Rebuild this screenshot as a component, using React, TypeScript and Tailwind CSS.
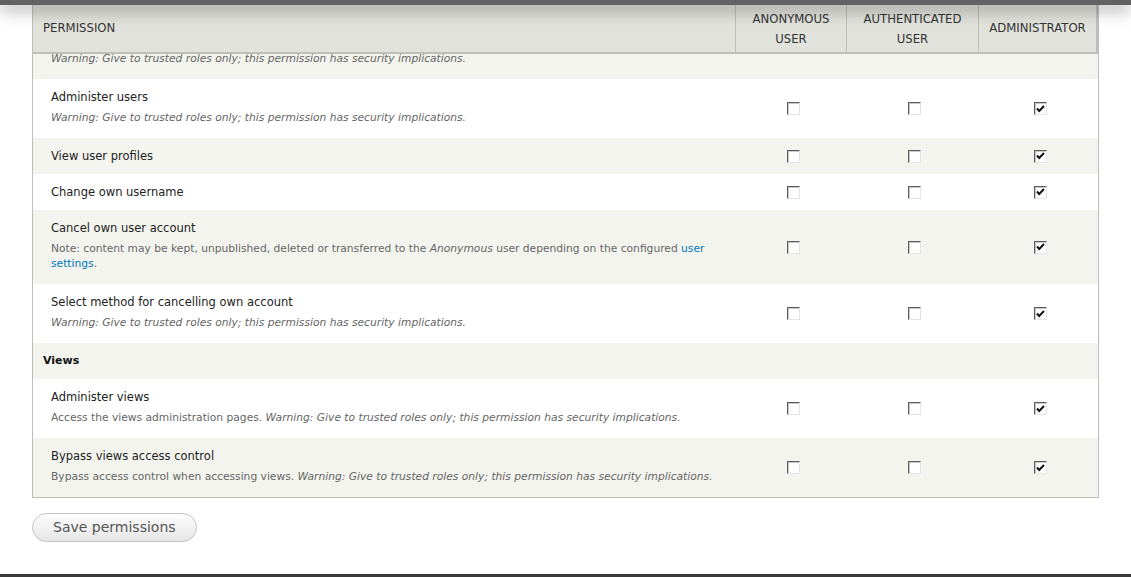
import React from 'react';

interface Perm {
  title: string
  desc?: React.ReactNode
  admin: boolean
}

const warning = (
  <em>Warning: Give to trusted roles only; this permission has security implications.</em>
)

const userPerms: Perm[] = [
  { title: 'Administer users', desc: warning, admin: true },
  { title: 'View user profiles', admin: true },
  { title: 'Change own username', admin: true },
  {
    title: 'Cancel own user account',
    desc: (
      <>
        Note: content may be kept, unpublished, deleted or transferred to the <em>Anonymous</em> user depending on the configured{' '}
        <a className="text-[#0074bd]">user settings</a>.
      </>
    ),
    admin: true,
  },
  { title: 'Select method for cancelling own account', desc: warning, admin: true },
]

const viewsPerms: Perm[] = [
  {
    title: 'Administer views',
    desc: <>Access the views administration pages. {warning}</>,
    admin: true,
  },
  {
    title: 'Bypass views access control',
    desc: <>Bypass access control when accessing views. {warning}</>,
    admin: true,
  },
]

const Checkbox: React.FC<{ checked?: boolean }> = ({ checked }) => (
  <span className="w-[13px] h-[13px] flex items-center justify-center border border-t-[#5c5c5c] border-l-[#5c5c5c] border-r-[#e4e4e4] border-b-[#e4e4e4] bg-white shadow-[inset_1px_1px_0_#c8c8c8]">
    {checked && (
      <svg width="9" height="8" viewBox="0 0 9 8">
        <path d="M1 3.5 L3.2 6 L8 1" fill="none" stroke="#111" strokeWidth="2" />
      </svg>
    )}
  </span>
)

const cols = 'grid grid-cols-[1fr_111px_132px_120px]'

const Row: React.FC<{ perm: Perm; odd: boolean }> = ({ perm, odd }) => (
  <div className={`${cols} ${odd ? 'bg-[#f3f4ee]' : 'bg-white'}`}>
    <div className="pl-[18px] pr-[10px] pt-[10px] pb-[10px]">
      <div className="text-[11.5px] leading-[16px] text-[#222]">{perm.title}</div>
      {perm.desc && (
        <div className="mt-[5px] mb-[3px] text-[10.7px] leading-[15px] text-[#666]">{perm.desc}</div>
      )}
    </div>
    <div className="flex items-center justify-center pl-[5px]"><Checkbox /></div>
    <div className="flex items-center justify-center pl-[5px]"><Checkbox /></div>
    <div className="flex items-center justify-center pl-[5px]"><Checkbox checked={perm.admin} /></div>
  </div>
)

export default function App() {
  return (
    <div className="h-[577px] flex flex-col bg-white overflow-hidden" style={{ fontFamily: '"DejaVu Sans", Verdana, sans-serif' }}>
      {/* sticky bar above the header, casts a shadow on the page */}
      <div className="h-[5px] shrink-0 bg-[#626262] relative z-10 shadow-[0_4px_16px_rgba(0,0,0,0.6)]" />

      <div className="mx-[32px] border border-t-0 border-[#bebfb9]">
        {/* table header */}
        <div className={`${cols} bg-[#e1e2dc] border-b-2 border-[#bebfb9] text-[11.7px] text-[#333] uppercase`}>
          <div className="px-[10px] flex items-center h-[47px]">Permission</div>
          <div className="border-l border-[#bebfb9] flex items-center justify-center text-center leading-[20px] pt-[1px]">Anonymous<br />user</div>
          <div className="border-l border-[#bebfb9] flex items-center justify-center text-center leading-[20px] pt-[1px]">Authenticated<br />user</div>
          <div className="border-l border-r-2 border-[#bebfb9] flex items-center justify-center text-center">Administrator</div>
        </div>

        {/* tail of the previous row, partly under the sticky header */}
        <div className="h-[25px] overflow-hidden bg-[#f3f4ee] flex flex-col justify-end">
          <div className="pl-[18px] pb-[10px]">
            <div className="mb-[3px] text-[10.7px] leading-[15px] text-[#666]">{warning}</div>
          </div>
        </div>

        {userPerms.map((p, i) => (
          <Row key={p.title} perm={p} odd={i % 2 === 1} />
        ))}

        <div className="bg-[#f3f4ee] h-[36px] flex items-center px-[10px] text-[11px] font-bold text-[#111]">Views</div>

        {viewsPerms.map((p, i) => (
          <Row key={p.title} perm={p} odd={i % 2 === 1} />
        ))}
      </div>

      <div className="mx-[32px] mt-[15px]">
        <button className="h-[29px] px-[20px] rounded-full border border-[#c4c4c4] bg-gradient-to-b from-[#fdfdfd] to-[#e6e6e6] text-[14px] text-[#555]">
          Save permissions
        </button>
      </div>

      <div className="mt-auto h-[3px] shrink-0 bg-[#3a3a3a]" />
    </div>
  )
}
